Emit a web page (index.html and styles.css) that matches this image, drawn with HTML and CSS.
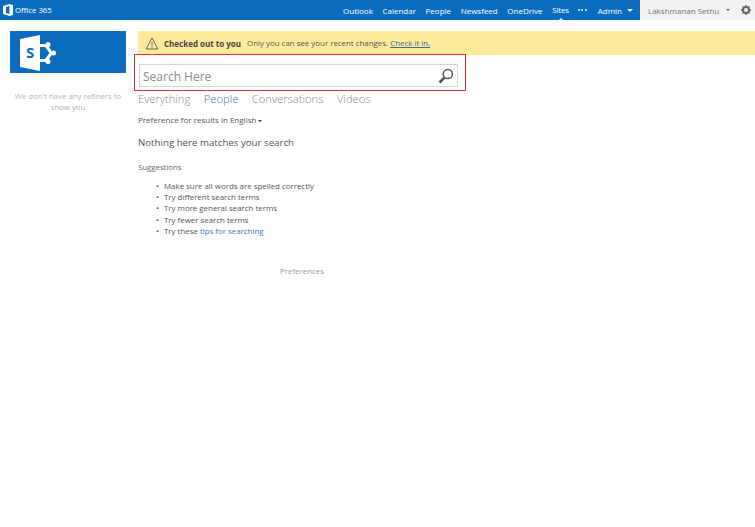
FILE: index.html
```html
<!DOCTYPE html>
<html lang="en">
<head>
<meta charset="utf-8">
<title>Search</title>
<link rel="stylesheet" href="styles.css">
</head>
<body>
<header class="topbar">
  <div class="brand">
    <svg class="brand-icon" width="10" height="12" viewBox="0 0 10 12"><path d="M0 2 6.400 0 10 1v10l-3.600 1L0 10zM6.400 2 3 3v6l3.400 1z" fill="#fff" fill-rule="evenodd"/></svg>
    <span>Office 365</span>
  </div>
  <nav class="nav">
    <span>Outlook</span><span>Calendar</span><span>People</span><span>Newsfeed</span><span>OneDrive</span>
    <span class="current">Sites</span>
    <span class="dots"><i></i><i></i><i></i></span>
    <span class="admin">Admin</span><span class="caret-white"></span>
  </nav>
  <div class="user">
    <span>Lakshmanan Sethu</span><span class="caret-grey"></span>
    <svg class="gear" width="10" height="10" viewBox="0 0 10 10"><circle cx="5" cy="5" r="3" fill="none" stroke="#666" stroke-width="2"/><path d="M5 0v2M5 8v2M0 5h2M8 5h2M1.500 1.500l1.400 1.400M7.100 7.100l1.400 1.400M1.500 8.500l1.400-1.400M7.100 2.900l1.400-1.400" stroke="#666" stroke-width="1.300"/></svg>
  </div>
</header>
<div class="page">
  <aside class="side">
    <div class="logo">
      <svg width="37" height="36" viewBox="0 0 37 36">
        <path d="M0 4 20 0v36L0 32z" fill="#fff"/>
        <path d="M20 9h7l6 9-6 9h-7v-3h5l4.500-6-4.500-6h-5z" fill="#fff"/>
        <circle cx="28" cy="9.500" r="2.500" fill="#fff"/>
        <circle cx="33.500" cy="18" r="2.500" fill="#fff"/>
        <circle cx="28" cy="26.500" r="2.500" fill="#fff"/>
        <text x="6" y="23" class="logo-s">S</text>
      </svg>
    </div>
    <p class="refiners">We don't have any refiners to show you</p>
  </aside>
  <main class="content">
    <div class="notice">
      <svg class="warn" width="14" height="13" viewBox="0 0 14 13"><path d="M7 1 13 12H1z" fill="none" stroke="#666" stroke-width="1"/><path d="M7 5v4M7 10v1" stroke="#666" stroke-width="1"/></svg>
      <b>Checked out to you</b>
      <span class="notice-text">Only you can see your recent changes. <a href="#">Check it in.</a></span>
    </div>
    <div class="search-highlight">
      <div class="search">
        <span class="placeholder">Search Here</span>
        <svg width="16" height="16" viewBox="0 0 16 16"><circle cx="9.800" cy="6" r="4.600" fill="none" stroke="#555" stroke-width="1.500"/><path d="M6.500 9.500 1.500 14.500" stroke="#555" stroke-width="2.600"/></svg>
      </div>
    </div>
    <div class="tabs"><span>Everything</span><span class="active">People</span><span>Conversations</span><span>Videos</span></div>
    <p class="pref">Preference for results in English <span class="caret-dark"></span></p>
    <h2 class="nothing">Nothing here matches your search</h2>
    <p class="sugg">Suggestions</p>
    <ul class="list">
      <li>Make sure all words are spelled correctly</li>
      <li>Try different search terms</li>
      <li>Try more general search terms</li>
      <li>Try fewer search terms</li>
      <li>Try these <a href="#">tips for searching</a></li>
    </ul>
    <p class="prefs-link">Preferences</p>
  </main>
</div>
</body>
</html>
```
FILE: styles.css
```css
* { box-sizing: border-box; }
html, body { margin: 0; padding: 0; background: #fff; }
body { width: 755px; height: 527px; overflow: hidden; font-family: "Open Sans", "Liberation Sans", sans-serif; color: #555; }
p, h2, ul { margin: 0; padding: 0; }
.topbar { height: 20px; display: flex; align-items: center; background: #0b6cbf; color: #fff; font-size: 8px; }
.brand { display: flex; align-items: center; gap: 2px; padding-left: 3px; width: 343px; flex: none; font-size: 7.800px; }
.nav { display: flex; align-items: center; gap: 9.600px; flex: 1; height: 20px; }
.dots { display: flex; gap: 1.500px; margin-left: -1px; }
.dots i { width: 2px; height: 2px; border-radius: 50%; background: #fff; }
.admin { margin-left: 1.500px; }
.caret-white { width: 0; height: 0; margin-left: -5px; border: 3px solid transparent; border-top-color: #fff; border-bottom: 0; }
.current { position: relative; height: 20px; line-height: 20px; letter-spacing: -0.150px; }
.current::after { content: ""; position: absolute; left: 7px; bottom: 0; border: 2px solid transparent; border-bottom-color: #fff; border-top: 0; }
.user { width: 115px; height: 20px; flex: none; display: flex; align-items: center; background: #f2f2f2; color: #777; padding-left: 8px; font-size: 8px; }
.caret-grey { width: 0; height: 0; margin-left: 7px; border: 2.500px solid transparent; border-top-color: #666; border-bottom: 0; }
.gear { margin-left: 11px; }
.page { display: flex; padding-top: 11px; }
.side { width: 138px; flex: none; padding-left: 10px; }
.logo { width: 116px; height: 42px; background: #0b6cbf; padding: 4px 0 0 10px; }
.logo-s { font: 700 15px "Open Sans", sans-serif; fill: #0b6cbf; }
.refiners { width: 116px; margin-top: 18px; text-align: center; font-size: 7.800px; line-height: 11px; color: #b5b5b5; }
.content { flex: 1; min-width: 0; }
.notice { height: 24px; display: flex; align-items: center; background: #fdeb9b; padding-left: 7px; font-size: 8px; color: #555; }
.notice b { margin-left: 5px; color: #444; }
.notice-text { margin-left: 6px; font-size: 7.900px; }
.notice a { color: #3b6a8a; }
.search-highlight { width: 332px; height: 37px; margin: -1px 0 0 -4px; border: 1px solid #d8303a; padding: 9px 7px 2px 4px; }
.search { height: 23px; display: flex; align-items: center; justify-content: space-between; border: 1px solid #d5d5d5; padding: 1px 3px 0 3px; }
.placeholder { font-size: 12px; color: #8a8a8a; }
.tabs { display: flex; gap: 13.500px; margin-top: -1px; height: 17px; align-items: center; font-size: 11.200px; color: #8a8a8a; font-weight: 300; }
.tabs .active { color: #3f78b5; }
.pref { margin-top: 7px; font-size: 8px; line-height: 11px; color: #555; }
.caret-dark { display: inline-block; width: 0; height: 0; vertical-align: 1px; border: 2.500px solid transparent; border-top-color: #333; border-bottom: 0; }
.nothing { margin-top: 11px; font-size: 9.700px; font-weight: 400; line-height: 14px; color: #555; }
.sugg { margin-top: 12px; font-size: 7.800px; line-height: 11px; color: #666; }
.list { margin-top: 8px; padding-left: 26px; list-style: none; font-size: 7.900px; line-height: 11.200px; color: #555; }
.list li { height: 11.200px; }
.list li::before { content: "•"; display: inline-block; width: 8px; margin-left: -8px; line-height: 8px; font-size: 8px; }
.list a { color: #3f78b5; text-decoration: none; }
.prefs-link { margin-top: 29px; padding-left: 142px; font-size: 7.900px; line-height: 11px; color: #999; }
```
